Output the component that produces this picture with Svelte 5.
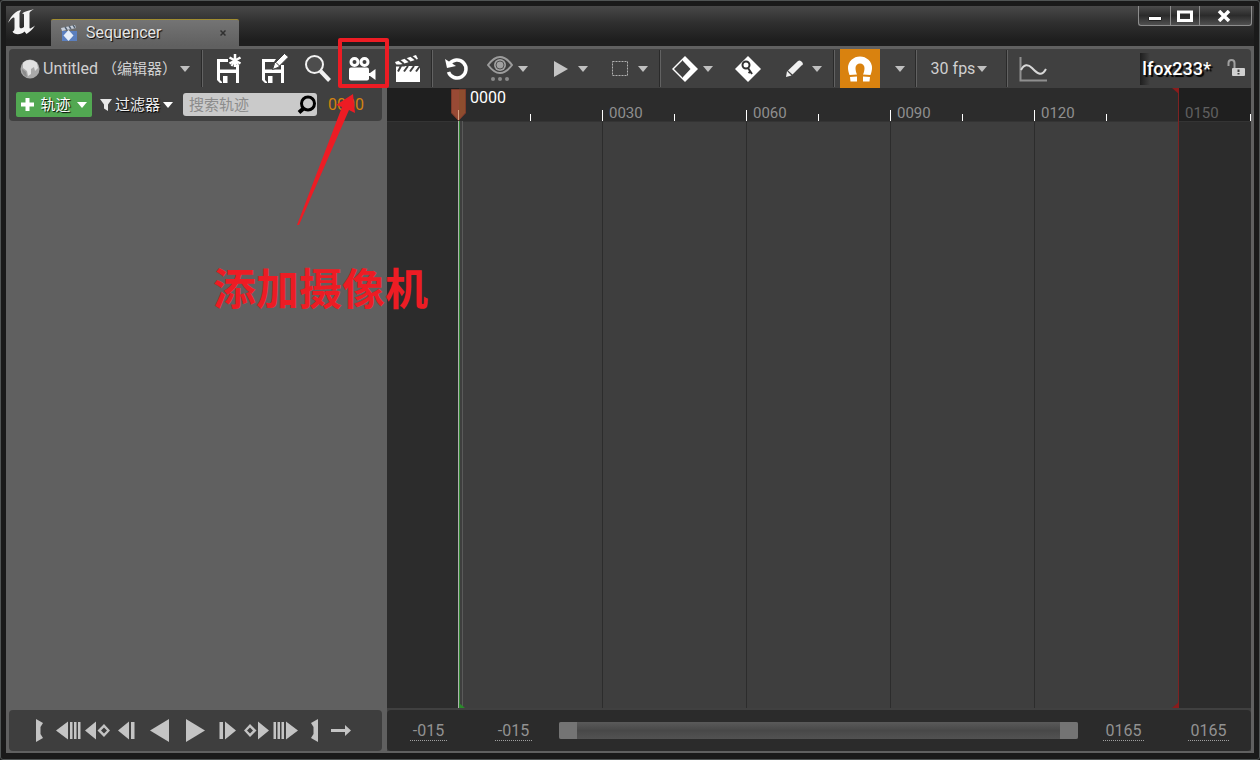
<script lang="ts">
  interface Column {
    end: number;
    major: boolean;
    label: string;
    outside: boolean;
  }

  const viewStart = -15;
  const viewEnd = 165;
  const playStart = 0;
  const playEnd = 150;
  const step = 15;

  const pad = (n: number) => (n < 0 ? '-' : '') + String(Math.abs(n)).padStart(n < 0 ? 3 : 4, '0');

  let frame = $state(0);
  let search = $state('');
  let snapping = $state(true);

  const columns: Column[] = [];
  for (let f = viewStart; f < viewEnd; f += step) {
    columns.push({
      end: f + step,
      major: (f + step) % 30 === 0,
      label: f > 0 && f % 30 === 0 ? pad(f) : '',
      outside: f < playStart || f >= playEnd,
    });
  }

  const percent = (f: number) => ((f - viewStart) / (viewEnd - viewStart)) * 100;

  const transport = [
    { name: 'Set start', w: 7, d: 'M0 0 7 4 4.500 8V15L7 19 0 23Z' },
    { name: 'Jump to start', w: 25, d: 'M12 2.500V20.500L0 11.500ZM14 3h2.500v17h-2.500ZM18 3h2.500v17h-2.500ZM22 3h2.500v17h-2.500Z' },
    { name: 'Previous key', w: 25, d: 'M11 2.500V20.500L0 11.500ZM19 5 25 11.500 19 18 12.500 11.500ZM19 8.500 16 11.500 19 14.500 22 11.500Z' },
    { name: 'Step back', w: 17, d: 'M11 2.500V20.500L0 11.500ZM13 3h3.500v17h-3.500Z' },
    { name: 'Play reverse', w: 19, big: true, d: 'M19 0V23L0 11.500Z' },
    { name: 'Play', w: 19, big: true, d: 'M0 0V23L19 11.500Z' },
    { name: 'Step forward', w: 17, d: 'M6 2.500V20.500L17 11.500ZM.500 3h3.500v17h-3.500Z' },
    { name: 'Next key', w: 25, d: 'M14 2.500V20.500L25 11.500ZM6 5 0 11.500 6 18 12.500 11.500ZM6 8.500 9 11.500 6 14.500 3 11.500Z' },
    { name: 'Jump to end', w: 25, d: 'M13 2.500V20.500L25 11.500ZM.500 3h2.500v17H.500ZM4.500 3h2.500v17h-2.500ZM8.500 3h2.500v17h-2.500Z' },
    { name: 'Set end', w: 7, d: 'M7 0V23L0 19 2.500 15V8L0 4Z' },
    { name: 'Loop mode', w: 20, d: 'M0 10H14V6L20 11.500 14 17V13H0Z' },
  ];
</script>

{#snippet caret()}
  <svg class="caret" width="10" height="6" viewBox="0 0 10 6"><path d="M0 0H10L5 6Z" fill="currentColor" /></svg>
{/snippet}

<div class="window">
  <header class="titlebar">
    <svg class="logo" width="29" height="26" viewBox="0 0 29 26">
      <path
        d="M0 14C3 6 8 2 13 1L11.500 4V17.500C11.500 20 14 19.500 16 18V5.500C16 4.500 15 4.500 14 5 16 2 20 2 26 0 24 1.500 21.500 2.500 21.500 4V18.500C21.500 20.500 23.500 19 27 16.500 24.500 21 21 23 18.500 25L16.500 22.500C13 26 6 26 4.500 22.500 6 22 6.500 21 6.500 19V9.500C6.500 7.500 4 8 0 14Z"
        fill="#f4f4f4"
      />
    </svg>
    <div class="tab">
      <svg width="17" height="17" viewBox="0 0 17 17">
        <path d="M1 6H16V16H1Z" fill="#5b7fbe" />
        <path d="M0 3 14 0 15 3 1 6Z" fill="#c8d0dc" />
        <path d="M4 2 6 5M8 1 10 4M12 0 14 3" stroke="#53616f" stroke-width="1.500" />
        <path d="M7.500 5 12.500 10.500 7.500 16 2.500 10.500Z" fill="#e5edf8" />
      </svg>
      <span>Sequencer</span>
      <button class="tab-close" aria-label="Close tab">
        <svg width="6" height="6" viewBox="0 0 6 6"><path d="M.5.5l5 5M5.500.5l-5 5" stroke="#303030" stroke-width="1.500" /></svg>
      </button>
    </div>
    <div class="win-buttons">
      <button class="minimize" aria-label="Minimize">
        <svg width="14" height="14" viewBox="0 0 14 14"><path d="M.5 7.500H13.500V11.500H.5Z" fill="#fff" stroke="#222" /></svg>
      </button>
      <button class="maximize" aria-label="Maximize">
        <svg width="16" height="12" viewBox="0 0 16 12"><path d="M1.500 2H14.500V10.500H1.500Z" fill="none" stroke="#fff" stroke-width="3" /></svg>
      </button>
      <button class="close" aria-label="Close">
        <svg width="14" height="12" viewBox="0 0 14 12"><path d="M2 1 12 11M12 1 2 11" stroke="#fff" stroke-width="3.500" /></svg>
      </button>
    </div>
  </header>

  <main class="body">
    <div class="toolbar">
      <button class="level">
        <svg width="20" height="20" viewBox="0 0 20 20">
          <circle cx="10" cy="10" r="9.500" fill="#a9a9a9" />
          <path d="M3 4C6 0 13 0 17 4L18 9 15 12 14 8 11 10V15L8 17 7 12 3 9Z" fill="#e2e2e2" />
          <path d="M2 10 6 13 7 18C4 17 2 14 2 10Z" fill="#8b8b8b" />
        </svg>
        <span>Untitled <span class="cjk">（编辑器）</span></span>
        {@render caret()}
      </button>
      <i class="sep"></i>
      <button class="tool" aria-label="Save as">
        <svg width="30" height="30" viewBox="0 0 30 30">
          <path d="M15 5V8H7V15.500H23V11H26V29H23V19H7V26L9 28V29H7L4 26V5ZM10 22H14.500V29H10Z" fill="#fff" />
          <path d="M22 0V13M16.500 3.500 27.500 9.500M27.500 3.500 16.500 9.500" stroke="#fff" stroke-width="2.500" />
          <path d="M18.500 12 22 6.500 25.500 12" stroke="#fff" stroke-width="2" fill="none" />
        </svg>
      </button>
      <button class="tool" aria-label="Save">
        <svg width="30" height="30" viewBox="0 0 30 30">
          <path d="M18 5 16 8H7V15.500H23V11H26V29H23V19H7V26L9 28V29H7L4 26V5ZM10 22H14.500V29H10Z" fill="#fff" />
          <path d="M14.500 15.500 16.500 9.500 26.500-.500 30.500 3 20 13.500Z" fill="#fff" stroke="#404040" />
          <path d="M18 8.500 21.500 12" stroke="#404040" />
        </svg>
      </button>
      <button class="tool" aria-label="Find in content browser">
        <svg width="28" height="30" viewBox="0 0 28 30">
          <circle cx="10.500" cy="10.500" r="8.500" fill="#4d4d4d" stroke="#f2f2f2" stroke-width="2" />
          <path d="M16.500 17 25.500 26.500" stroke="#f2f2f2" stroke-width="4" />
        </svg>
      </button>
      <button class="tool" aria-label="Create camera">
        <svg width="28" height="26" viewBox="0 0 28 26">
          <circle cx="5.500" cy="6" r="3.500" fill="none" stroke="#fff" stroke-width="3" />
          <circle cx="15.500" cy="6" r="3.500" fill="none" stroke="#fff" stroke-width="3" />
          <rect x="0" y="11.500" width="20" height="13" rx="2" fill="#fff" />
          <path d="M19 17H21L26.500 13V24L21 20H19Z" fill="#fff" />
        </svg>
      </button>
      <button class="tool" aria-label="Render movie">
        <svg width="26" height="28" viewBox="0 0 26 28">
          <path d="M1 11H25V27H1ZM0 7 21 0 23 4 2 11Z" fill="#fff" />
          <path d="M4 5 9 9M10 3 15 7M16 1 21 5" stroke="#404040" stroke-width="2" />
          <path d="M1 10.500H9L24 5.500M3 16.500 6 11M9 16.500 13 11M15 16.500 19 11M21 16.500 25 11" stroke="#404040" stroke-width="2" fill="none" />
        </svg>
      </button>
      <i class="sep"></i>
      <button class="tool undo" aria-label="Restore animated state">
        <svg width="24" height="24" viewBox="0 0 24 24">
          <path d="M4.500 7A9 9 0 1 1 3.500 15" fill="none" stroke="#fff" stroke-width="3.500" />
          <path d="M0 2 2 11 11 9Z" fill="#fff" />
        </svg>
      </button>
      <button class="combo" aria-label="View options">
        <span>
          <svg width="26" height="26" viewBox="0 0 26 26">
            <path d="M1 9Q13-7 25 9Q13 25 1 9Z" fill="#3e3e3e" stroke="#9c9c9c" stroke-width="2" />
            <circle cx="13" cy="9" r="6" fill="#a0a0a0" />
            <circle cx="13" cy="9" r="4" fill="none" stroke="#505050" />
            <circle cx="6" cy="23" r="2" fill="#8a8a8a" /><circle cx="13" cy="23" r="2" fill="#8a8a8a" /><circle cx="20" cy="23" r="2" fill="#8a8a8a" />
          </svg>
        </span>
        {@render caret()}
      </button>
      <button class="combo" aria-label="Playback options">
        <span><svg width="16" height="16" viewBox="0 0 16 16"><path d="M2 0 16 8 2 16Z" fill="#c4c4c4" /></svg></span>
        {@render caret()}
      </button>
      <button class="combo" aria-label="Selection options">
        <span><svg width="16" height="15" viewBox="0 0 16 15"><path d="M.5.5H15.500V14.500H.5Z" fill="none" stroke="#b0b0b0" stroke-dasharray="2 1" /></svg></span>
        {@render caret()}
      </button>
      <i class="sep"></i>
      <button class="combo" aria-label="Key options">
        <span>
          <svg width="26" height="26" viewBox="0 0 26 26">
            <path d="M13 0 26 13 13 26 0 13Z" fill="#fff" /><path d="M11 4V22L2 13Z" fill="#404040" /><path d="M11 5 18.500 13 11 21Z" fill="#404040" />
          </svg>
        </span>
        {@render caret()}
      </button>
      <button class="tool key" aria-label="Auto key">
        <svg width="26" height="26" viewBox="0 0 26 26">
          <path d="M13 0 26 13 13 26 0 13Z" fill="#fff" />
          <circle cx="11" cy="9" r="3.500" fill="none" stroke="#303030" stroke-width="2" />
          <path d="M13 12 17 18M13.500 17 16 15" stroke="#303030" stroke-width="2" />
        </svg>
      </button>
      <button class="combo" aria-label="Edit options">
        <span><svg width="18" height="18" viewBox="0 0 18 18"><path d="M1 17 2 11 4.500 13.500 6.500 15.500ZM3 10.500 13 1Q15-.5 17 2T16.500 5.500L7.500 14.500Z" fill="#f0f0f0" /></svg></span>
        {@render caret()}
      </button>
      <i class="sep"></i>
      <button class="snap" class:on={snapping} aria-label="Snapping" aria-pressed={snapping} onclick={() => (snapping = !snapping)}>
        <svg width="24" height="26" viewBox="0 0 24 26">
          <path
            d="M1.500 19C.5 16 0 14 0 12A12 11.500 0 0 1 24 12C24 14 23.500 16 22.500 19L15 18.500C16 16.500 16.500 14 16.500 12A4.500 4.500 0 0 0 7.500 12C7.500 14 8 16.500 9 18.500Z"
            fill="#fff"
          />
          <path d="M2 21 9 20.500V25.500H2.500ZM15 20.500 22 21 21.500 25.500H15Z" fill="#fff" />
        </svg>
      </button>
      <button class="snap-menu" aria-label="Snapping options">{@render caret()}</button>
      <i class="sep"></i>
      <button class="fps">30 fps{@render caret()}</button>
      <i class="sep"></i>
      <button class="tool" aria-label="Curve editor">
        <svg width="28" height="26" viewBox="0 0 28 26">
          <path d="M1.500 1V24.500H28" fill="none" stroke="#8f8f8f" stroke-width="2" />
          <path d="M2 14C5 8 9 8 13 12S22 22 27 13" fill="none" stroke="#d8d8d8" stroke-width="2" />
        </svg>
      </button>
      <div class="crumb">lfox233*</div>
      <button class="lock" aria-label="Lock sequence">
        <svg width="18" height="18" viewBox="0 0 18 18">
          <path d="M1.500 7V4Q1.500 1 4.500 1T7.500 4V9" fill="none" stroke="#a0a0a0" stroke-width="2" />
          <rect x="5" y="9" width="13" height="8" rx="1" fill="#d0d0d0" />
          <path d="M11.500 10.500V13M11.500 14V15.500" stroke="#404040" stroke-width="2" />
        </svg>
      </button>
    </div>

    <section class="outliner">
      <div class="outliner-head">
        <button class="add-track">
          <svg width="13" height="13" viewBox="0 0 13 13"><path d="M6.500 0V13M0 6.500H13" stroke="#fff" stroke-width="4" /></svg>
          <span>轨迹</span>
          {@render caret()}
        </button>
        <button class="filters">
          <svg width="12" height="12" viewBox="0 0 12 12"><path d="M0 0H12L8 5.500V12L4 9.500V5.500Z" fill="#e6e6e6" /></svg>
          <span>过滤器</span>
          {@render caret()}
        </button>
        <label class="search">
          <input type="text" placeholder="搜索轨迹" aria-label="搜索轨迹" bind:value={search} />
          <svg width="20" height="20" viewBox="0 0 20 20">
            <circle cx="11" cy="8.500" r="6.500" fill="none" stroke="#000" stroke-width="3" />
            <path d="M2 17.500 7 13" stroke="#000" stroke-width="4" />
          </svg>
        </label>
        <span class="current">{pad(frame)}</span>
      </div>
      <div class="tree"></div>
      <div class="transport">
        {#each transport as item}
          <button class:big={item.big} aria-label={item.name}>
            <svg width={item.w} height="23" viewBox="0 0 {item.w} 23"><path d={item.d} fill="#c4c4c4" fill-rule="evenodd" /></svg>
          </button>
        {/each}
      </div>
    </section>

    <section class="timeline">
      <div class="ruler">
        {#each columns as col}
          <div class="tick" class:major={col.major} class:outside={col.outside} class:first={col.end === playStart}>{col.label}</div>
        {/each}
      </div>
      <div class="tracks">
        {#each columns as col}
          <div class="lane" class:major={col.major} class:outside={col.outside}></div>
        {/each}
      </div>
      <div class="range-start" style="left:{percent(playStart)}%"></div>
      <div class="range-end" style="left:{percent(playEnd)}%"></div>
      <div class="playhead" style="left:{percent(frame)}%">
        <svg width="15" height="33" viewBox="0 0 15 33">
          <path d="M.5 1.500H14.500V25L7.500 32.500.5 25Z" fill="#984a35" stroke="#7d3b2a" />
          <path d="M8 2H14V24L8 31Z" fill="#8d4d2e" />
          <path d="M7.500 22V32" stroke="#d9a184" />
        </svg>
        <span>{pad(frame)}</span>
      </div>
      <div class="range-bar">
        <input class="neg" type="text" aria-label="Working range start" value={pad(viewStart)} />
        <input class="neg" type="text" aria-label="View range start" value={pad(viewStart)} />
        <div class="scroller">
          <button aria-label="Resize view start"></button>
          <button aria-label="Resize view end"></button>
        </div>
        <input type="text" aria-label="View range end" value={pad(viewEnd)} />
        <input type="text" aria-label="Working range end" value={pad(viewEnd)} />
      </div>
    </section>
  </main>

  <div class="callout-box"></div>
  <svg class="callout-arrow" width="60" height="132" viewBox="0 0 60 132">
    <path d="M57 0 59 19 53 16 3 131H1L46 13 40 11Z" fill="#ed1c24" />
  </svg>
  <div class="callout-text">添加摄像机</div>
</div>

<style>
  :global(body) { background: #1b1b1b; }
  * { box-sizing: border-box; }

  .window {
    position: relative; min-height: 100vh; padding: 5px 5px 6px;
    display: flex; flex-direction: column;
    background: #1a1a1a; border: 1px solid #505454; border-radius: 3px;
    font-family: Roboto, 'Noto Sans CJK SC', sans-serif; font-size: 16px; line-height: 20px; color: #d0d0d0;
  }
  button {
    display: flex; align-items: center; justify-content: center; flex-shrink: 0;
    padding: 0; border: 0; background: none; color: inherit; font: inherit;
  }
  input { font: inherit; border: 0; padding: 0; margin: 0; outline: none; }
  svg { display: block; flex-shrink: 0; }

  .titlebar {
    height: 40px; display: flex; align-items: flex-start;
    background: linear-gradient(#484848, #303030 16px, #1e1e1e 34px);
  }
  .logo { margin: 3px 14px 0 2px; }
  .tab {
    width: 188px; height: 27px; margin-top: 13px; padding: 0 13px 0 10px;
    display: flex; align-items: center; gap: 8px;
    background: linear-gradient(#747474, #606060); border-top: 1px solid #a08c30; border-radius: 2px 2px 0 0;
    color: #e6e6e6; text-shadow: 1px 1px 1px #000;
  }
  .tab-close { margin-left: auto; }
  .win-buttons { margin-left: auto; display: flex; height: 20px; padding-right: 2px; }
  .win-buttons button {
    border: 1px solid #8d8d8d; border-top: 0; border-right: 0;
    background: linear-gradient(#4c4c4c, #2b2b2b 50%, #505050);
  }
  .win-buttons .minimize { width: 32px; border-radius: 0 0 0 3px; }
  .win-buttons .maximize { width: 29px; }
  .win-buttons .close { width: 53px; padding-right: 4px; border-right: 1px solid #8d8d8d; border-radius: 0 0 3px 0; }

  .body {
    flex: 1; display: grid; gap: 0 5px; padding: 3px 3px 2px;
    grid-template: 39px minmax(0, 1fr) / 373px minmax(0, 1fr);
    background: #606060;
  }

  .toolbar {
    grid-column: 1 / -1; display: flex; align-items: stretch;
    background: #404040; border-radius: 4px 4px 0 0;
  }
  .caret { color: #c0c0c0; }
  .sep {
    width: 5px; flex-shrink: 0; margin: 1px 0;
    background: linear-gradient(90deg, transparent 1px, #2a2a2a 1px, #2a2a2a 2px, #626262 2px, #626262 3px, transparent 3px);
  }
  .level { width: 191px; justify-content: flex-start; padding-left: 11px; gap: 3px; white-space: nowrap; }
  .cjk { font-size: 15px; }
  .tool { width: 45px; }
  .tool.undo { width: 43px; }
  .tool.key { width: 49px; }
  .combo { width: 60px; justify-content: flex-start; }
  .combo span { width: 40px; display: flex; justify-content: center; padding-left: 4px; }
  .snap { width: 40px; margin-left: 3px; }
  .snap.on { background: #d9820f; }
  .snap-menu { width: 34px; padding-left: 5px; }
  .fps { width: 86px; gap: 2px; padding-right: 6px; white-space: nowrap; }
  .crumb {
    margin-left: auto; padding-left: 2px; align-self: center; line-height: 32px;
    background: linear-gradient(90deg, #1e1e1e, #404040 10px);
    color: #fff; font-size: 18px; font-weight: 500; text-shadow: 2px 2px 1px #000;
  }
  .lock { width: 40px; padding-left: 9px; padding-bottom: 2px; }

  .outliner, .timeline { display: flex; flex-direction: column; min-width: 0; }
  .outliner-head {
    height: 33px; display: flex; align-items: center; padding-left: 7px;
    background: #404040; border-radius: 0 0 4px 4px; font-size: 15px;
  }
  .outliner-head .caret { color: #fff; }
  .add-track {
    width: 76px; height: 25px; gap: 6px; background: #52a852; border-radius: 2px;
    color: #fff; text-shadow: 1px 1px 1px #000;
  }
  .filters { margin: 0 10px 0 8px; gap: 3px; color: #eee; text-shadow: 1px 1px 1px #000; }
  .search {
    width: 134px; height: 23px; display: flex; align-items: center; padding-left: 6px;
    background: #cacaca; border-radius: 3px;
  }
  .search input { flex: 1; min-width: 0; background: none; color: #222; }
  .search input::placeholder { color: #8c8c8c; opacity: 1; }
  .current { margin-left: 11px; font-size: 16px; color: #d4830f; }
  .tree { flex: 1; }
  .transport {
    height: 41px; display: flex; padding-left: 16px;
    background: #3e3e3e; border-radius: 4px;
  }
  .transport button { width: 29px; }
  .transport .big { width: 36px; }
  .transport button:last-child { width: 24px; }

  .timeline { position: relative; background: #404040; }
  .ruler, .tracks { display: grid; grid-template-columns: repeat(12, minmax(0, 1fr)); }
  .ruler { height: 33px; }
  .tick {
    padding: 18px 0 0 6px; font-size: 15px; line-height: 15px; color: #8f8f8f; white-space: nowrap;
    background: linear-gradient(#fff, #fff) no-repeat right bottom / 1px 7px #2c2c2c;
  }
  .tick.major { background-size: 1px 11px; }
  .tick.outside { background-color: #1f1f1f; color: #606060; }
  .tick.first { background-image: none; }
  .tracks { flex: 1; border-top: 1px solid #343434; }
  .lane { background: #3e3e3e; }
  .lane.major { border-right: 1px solid #2c2c2c; }
  .lane.outside { background: #2c2c2c; }

  .range-start {
    position: absolute; top: 33px; bottom: 43px; width: 5px; margin-left: -1px;
    background: linear-gradient(90deg, #b0b0b0 1px, #328a32 1px, #328a32 2px, #3e3e3e 2px, #3e3e3e 4px, #5a5a5a 4px);
  }
  .range-start::after {
    content: ''; position: absolute; left: 1px; bottom: 0;
    border: solid transparent; border-width: 5px 0 0 6px; border-left-color: #2a8a2a;
  }
  .range-end { position: absolute; top: 0; bottom: 43px; width: 1px; margin-left: -1px; background: #7d2222; }
  .range-end::before, .range-end::after { content: ''; position: absolute; right: 0; width: 7px; height: 6px; background: #8a1c1c; }
  .range-end::before { top: 0; clip-path: polygon(0 0, 100% 0, 100% 100%); }
  .range-end::after { bottom: 0; clip-path: polygon(0 100%, 100% 0, 100% 100%); }
  .playhead {
    position: absolute; top: 0; margin-left: -8px;
    display: flex; gap: 4px; color: #fff;
  }

  .range-bar {
    height: 41px; margin-top: 2px; padding: 0 22px 0 23px; display: flex; align-items: center;
    background: #2b2b2b; border-radius: 4px;
  }
  .range-bar input {
    width: 41px; height: 21px; text-align: center; background: none; color: #929292;
    border-bottom: 1px dotted #a0a0a0;
  }
  .range-bar .neg { width: 37px; }
  .range-bar .neg:first-child { margin-right: 48px; }
  .range-bar input:last-child { margin-left: 44px; }
  .scroller {
    flex: 1; height: 17px; margin: 0 25px 0 27px; display: flex; justify-content: space-between;
    background: linear-gradient(#5a5a5a, #484848 50%, #525252); border-radius: 2px; overflow: hidden;
  }
  .scroller button { width: 18px; background: #747474; }

  .callout-box {
    position: absolute; left: 337px; top: 37px; width: 51px; height: 50px;
    border: 4px solid #ed1c24; border-radius: 2px; pointer-events: none;
  }
  .callout-arrow { position: absolute; left: 295px; top: 93px; pointer-events: none; }
  .callout-text {
    position: absolute; left: 212px; top: 255px; pointer-events: none;
    color: #ed1c24; font: bold 43px/60px 'Noto Sans CJK SC', sans-serif;
  }
</style>
